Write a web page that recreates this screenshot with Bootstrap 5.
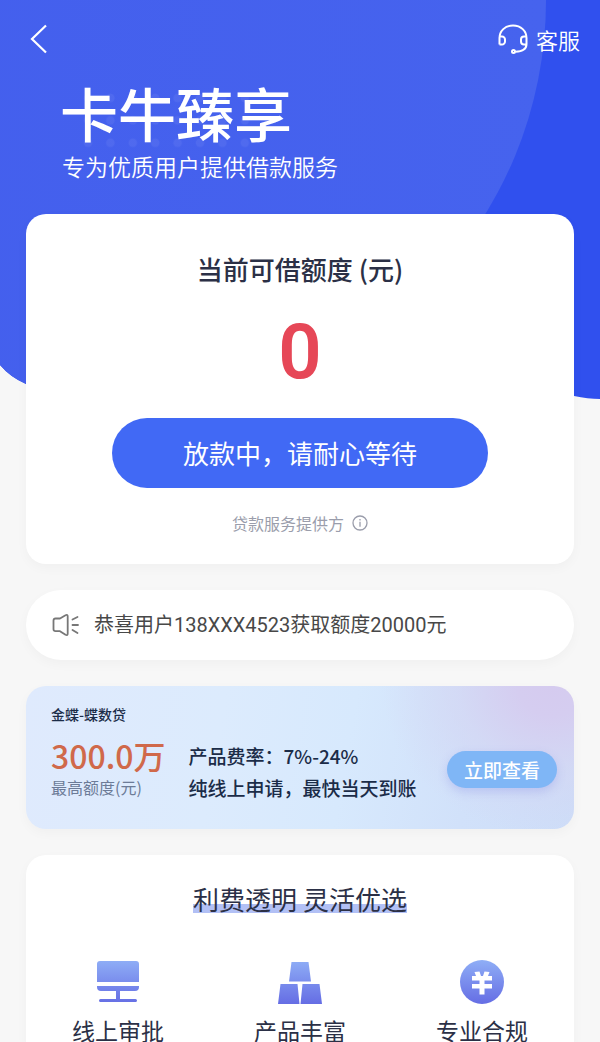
<!DOCTYPE html>
<html lang="zh-CN">
<head>
<meta charset="utf-8">
<meta name="viewport" content="width=device-width, initial-scale=1">
<title>卡牛臻享</title>
<link href="https://cdn.jsdelivr.net/npm/bootstrap@5.3.0/dist/css/bootstrap.min.css" rel="stylesheet">
<style>
body{background:#f7f7f7;color:#2b3046;font-family:"Noto Sans CJK SC",sans-serif;line-height:1}
.page{overflow:hidden}
.hero-bg{left:0;top:0;width:100%;height:400px}
.topbar{height:78px;padding:0 20px 0 30px}
.bare{background:none;border:0;padding:0;color:#fff}
.service{color:#fff;font-size:22px;font-weight:350}
.hero-title{padding:0 60px;height:136px;color:#fff}
.hero-title h1{font-size:58px;font-weight:500;line-height:68px;margin:0}
.hero-title p{font-size:23px;font-weight:350;line-height:34px;margin:3px 0 0 2px}
.dots{left:82px;top:14px}
.main-col{padding:0 26px}
.panel{background:#fff;border-radius:20px;box-shadow:0 4px 12px rgba(0,0,0,.03)}
.quota{height:350px;padding-top:39px}
.quota h2{font-size:26px;font-weight:500;line-height:32px}
.amount{font-family:Roboto,sans-serif;font-weight:600;font-size:76px;line-height:76px;color:#e64757;margin-top:29px}
.wait{width:376px;max-width:80%;height:70px;font-size:26px;background:#4169f5;color:#fff;border:0;margin-top:28px;padding-bottom:2px}
.provider{font-size:16px;line-height:20px;color:#9a9dab;margin-top:25px}
.notice{height:70px;border-radius:35px;margin-top:26px;padding:0 26px;font-family:Roboto,"Noto Sans CJK SC",sans-serif;font-size:20px;color:#484848}
.notice-text{margin-left:14px}
.offer{height:143px;margin-top:26px;padding:18px 17px 0 25px;color:#1b2c48;background:radial-gradient(ellipse 170px 150px at 96% 0,#d5cbef 0,#d5cdf0 20%,rgba(212,214,243,.7) 55%,rgba(211,224,249,0) 100%),linear-gradient(100deg,#dfeafd 0,#dcebfd 35%,#d7e9fd 58%,#d1e1fa 80%,#cdddf8 100%)}
.offer h3{font-size:14px;font-weight:500;line-height:20px;margin:0}
.sum{color:#d0694a;font-size:32px;font-weight:500;line-height:40px;margin-top:11px}
.limit{font-size:16px;line-height:20px;color:#6c7b97;margin-top:2px}
.terms{font-size:19px;font-weight:500;line-height:32px;margin:36px 0 0 23px}
.look{width:110px;height:37px;margin-top:47px;background:#7fb6f6;color:#fff;font-size:19px;font-weight:500;border:0;padding:0;box-shadow:0 4px 10px rgba(130,140,230,.3)}
.feats{margin-top:26px;border-radius:20px 20px 0 0;padding-top:30px}
.feats h2{font-size:26px;font-weight:400;line-height:28px;margin:0}
.hl{background:linear-gradient(#b2c0f5,#b2c0f5) 0 100%/100% 9px no-repeat}
.feat-row{margin-top:47px;padding:0 1px}
.feat-row p{font-size:23px;line-height:30px;margin:11px 0 0}
</style>
</head>
<body>
<div class="page position-relative">
  <svg class="hero-bg position-absolute" viewBox="0 0 600 400" preserveAspectRatio="none" aria-hidden="true">
    <defs>
      <clipPath id="heroShape"><path d="M0 0H600V399Q588 399 574 396C420 440 150 440 26 384Q10 377 0 365Z"/></clipPath>
      <linearGradient id="orb" x1="0" y1="0" x2="1" y2="0"><stop offset="0" stop-color="#435eed"/><stop offset="1" stop-color="#4663ee"/></linearGradient>
    </defs>
    <g clip-path="url(#heroShape)"><rect width="600" height="400" fill="#3050ee"/><circle cx="138" cy="0" r="408" fill="url(#orb)"/></g>
  </svg>

  <header class="position-relative">
    <nav class="topbar d-flex align-items-center justify-content-between">
      <button class="bare" type="button" aria-label="返回"><svg class="d-block" width="18" height="30" viewBox="0 0 18 30" fill="none" stroke="#fff" stroke-width="2.2"><path d="M16 1.500 2 15 16 28.500"/></svg></button>
      <a href="#" class="service d-flex align-items-center gap-2 text-decoration-none">
        <svg width="30" height="30" viewBox="0 0 30 30" fill="none" stroke="#fff" stroke-width="2"><path d="M1.500 20.500V14C1.500 7 7 1.500 15 1.500S28.500 7 28.500 14v6c0 5-4 7.500-11 7.700M1.500 12.500H4a3 3 0 0 1 3 3v2a3 3 0 0 1-3 3H1.500M28.500 12.500H26a3 3 0 0 0-3 3v2a3 3 0 0 0 3 3h2.500"/><circle cx="15.500" cy="27.500" r="1.500"/></svg>
        <span>客服</span>
      </a>
    </nav>
    <div class="hero-title position-relative">
      <svg class="dots position-absolute" width="170" height="60" aria-hidden="true"><defs><pattern id="dot" width="22.400" height="22.400" patternUnits="userSpaceOnUse"><circle cx="6" cy="6" r="4.200" fill="#fff" fill-opacity=".06"/></pattern></defs><rect width="170" height="60" fill="url(#dot)"/></svg>
      <h1 class="position-relative">卡牛臻享</h1>
      <p>专为优质用户提供借款服务</p>
    </div>
  </header>

  <main class="main-col position-relative">
    <section class="panel quota d-flex flex-column align-items-center">
      <h2 class="m-0">当前可借额度 (元)</h2>
      <div class="amount">0</div>
      <button class="wait rounded-pill" type="button">放款中，请耐心等待</button>
      <div class="provider d-flex align-items-center"><span>贷款服务提供方</span>
        <svg class="ms-2" width="16" height="16" viewBox="0 0 16 16" fill="none" stroke="#9a9dab" stroke-width="1.300"><circle cx="8" cy="8" r="7"/><path d="M8 6.800v5M8 3.900v1.500"/></svg></div>
    </section>

    <section class="panel notice d-flex align-items-center">
      <svg class="flex-shrink-0" width="28" height="24" viewBox="0 0 28 24" fill="none" stroke="#777" stroke-width="1.800" stroke-linecap="round" stroke-linejoin="round"><path d="M3.500 5.500H8L13.500 2.200q2.200-1 2.200 1.300v17q0 2.300-2.200 1.300L8 18.200H3.500q-2 0-2-2v-8.700q0-2 2-2ZM20.500 6.500 25.500 4M20.500 12H26M20.500 17 25.500 20"/></svg>
      <span class="notice-text text-nowrap">恭喜用户138XXX4523获取额度20000元</span>
    </section>

    <section class="panel offer d-flex align-items-start">
      <div class="text-nowrap">
        <h3>金蝶-蝶数贷</h3>
        <div class="sum">300.0万</div>
        <div class="limit">最高额度(元)</div>
      </div>
      <div class="terms text-nowrap"><div>产品费率：7%-24%</div><div>纯线上申请，最快当天到账</div></div>
      <button class="look rounded-pill ms-auto" type="button">立即查看</button>
    </section>

    <section class="panel feats text-center">
      <h2><span class="hl d-inline-block">利费透明 灵活优选</span></h2>
      <svg width="0" height="0" class="position-absolute" aria-hidden="true"><defs><linearGradient id="ic" gradientUnits="userSpaceOnUse" x1="0" y1="0" x2="0" y2="44"><stop offset="0" stop-color="#8faef6"/><stop offset="1" stop-color="#656de4"/></linearGradient></defs></svg>
      <div class="feat-row row g-0">
        <div class="col"><svg width="44" height="44" viewBox="0 0 44 44" fill="url(#ic)"><path d="M4 1H40Q43 1 43 4V22H1V4Q1 1 4 1ZM1 26H43V27Q43 31 39 31H24V39H39.500a1.500 1.500 0 0 1 0 3H4.500a1.500 1.500 0 0 1 0-3H20V31H5Q1 31 1 27Z"/></svg><p>线上审批</p></div>
        <div class="col"><svg width="44" height="44" viewBox="0 0 44 44" fill="url(#ic)"><path d="M13.500 2h17l2.500 19.500H11ZM2.500 24h17L21.500 44H0ZM24.500 24h17L44 44H22.500Z"/></svg><p>产品丰富</p></div>
        <div class="col"><svg width="44" height="44" viewBox="0 0 44 44"><circle cx="22" cy="22" r="22" fill="url(#ic)"/><path d="M14.500 12 19.500 11.500 21 16H23L24.500 11.500 29.500 12 28 16H32V20.500H24.500V24H32V28.500H24.500V34.500H19.500V28.500H12V24H19.500V20.500H12V16H16Z" fill="#fff"/></svg><p>专业合规</p></div>
      </div>
    </section>
  </main>
</div>
<script src="https://cdn.jsdelivr.net/npm/bootstrap@5.3.0/dist/js/bootstrap.bundle.min.js"></script>
</body>
</html>
